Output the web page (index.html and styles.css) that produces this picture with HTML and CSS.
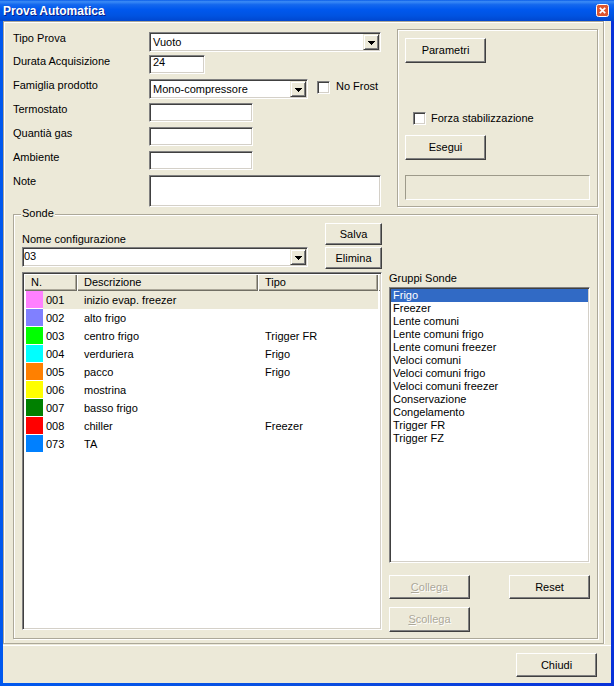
FILE: index.html
```html
<!DOCTYPE html>
<html>
<head>
<meta charset="utf-8">
<title>Prova Automatica</title>
<link rel="stylesheet" href="styles.css">
</head>
<body>
<div class="window">
  <div class="titlebar">
    <span class="title">Prova Automatica</span>
    <span class="close"><svg width="13" height="13" viewBox="0 0 13 13"><rect x="0.5" y="0.5" width="12" height="12" rx="2" fill="#DD5530" stroke="#fff"/><path d="M3.8 3.8L9.2 9.2M9.2 3.8L3.8 9.2" stroke="#fff" stroke-width="1.7"/></svg></span>
  </div>
  <div class="client">
    <div class="main">
      <div class="top">
        <div class="form">
          <span class="lbl">Tipo Prova</span>
          <div class="combo w232"><span class="ctext">Vuoto</span><span class="ddbtn"><svg width="7" height="4" viewBox="0 0 7 4"><path d="M0 0h7v1H0zM1 1h5v1H1zM2 2h3v1H2zM3 3h1v1H3z"/></svg></span></div>

          <span class="lbl">Durata Acquisizione</span>
          <div class="tbox w56">24</div>

          <span class="lbl">Famiglia prodotto</span>
          <div class="famrow">
            <div class="combo w159"><span class="ctext">Mono-compressore</span><span class="ddbtn"><svg width="7" height="4" viewBox="0 0 7 4"><path d="M0 0h7v1H0zM1 1h5v1H1zM2 2h3v1H2zM3 3h1v1H3z"/></svg></span></div>
            <span class="chk nofrost"></span>
            <span class="chklbl">No Frost</span>
          </div>

          <span class="lbl">Termostato</span>
          <div class="tbox w104"></div>

          <span class="lbl">Quantià gas</span>
          <div class="tbox w104"></div>

          <span class="lbl">Ambiente</span>
          <div class="tbox w104"></div>

          <span class="lbl">Note</span>
          <div class="tbox note"></div>
        </div>

        <div class="rbox">
          <button class="btn b81">Parametri</button>
          <div class="chkrow"><span class="chk"></span><span class="chklbl">Forza stabilizzazione</span></div>
          <button class="btn b81 esegui">Esegui</button>
          <div class="status"></div>
        </div>
      </div>

      <div class="group">
        <span class="legend">Sonde</span>
        <div class="lcol">
          <div class="cfgrow">
            <div class="cfgleft">
              <span class="lbl">Nome configurazione</span>
              <div class="combo w286"><span class="ctext t03">03</span><span class="ddbtn"><svg width="7" height="4" viewBox="0 0 7 4"><path d="M0 0h7v1H0zM1 1h5v1H1zM2 2h3v1H2zM3 3h1v1H3z"/></svg></span></div>
            </div>
            <div class="cfgbtns">
              <button class="btn b57">Salva</button>
              <button class="btn b57">Elimina</button>
            </div>
          </div>
          <div class="listview">
            <div class="lvhead">
              <span class="hc c1">N.</span>
              <span class="hc c2">Descrizione</span>
              <span class="hc c3">Tipo</span>
              <span class="hfill"></span>
            </div>
            <div class="row sel"><span class="sw" style="background:#FF80FF"></span><span class="cells"><span class="num">001</span><span class="desc">inizio evap. freezer</span><span class="tipo"></span></span></div>
            <div class="row"><span class="sw" style="background:#8080FF"></span><span class="cells"><span class="num">002</span><span class="desc">alto frigo</span><span class="tipo"></span></span></div>
            <div class="row"><span class="sw" style="background:#00FF00"></span><span class="cells"><span class="num">003</span><span class="desc">centro frigo</span><span class="tipo">Trigger FR</span></span></div>
            <div class="row"><span class="sw" style="background:#00FFFF"></span><span class="cells"><span class="num">004</span><span class="desc">verduriera</span><span class="tipo">Frigo</span></span></div>
            <div class="row"><span class="sw" style="background:#FF8000"></span><span class="cells"><span class="num">005</span><span class="desc">pacco</span><span class="tipo">Frigo</span></span></div>
            <div class="row"><span class="sw" style="background:#FFFF00"></span><span class="cells"><span class="num">006</span><span class="desc">mostrina</span><span class="tipo"></span></span></div>
            <div class="row"><span class="sw" style="background:#008000"></span><span class="cells"><span class="num">007</span><span class="desc">basso frigo</span><span class="tipo"></span></span></div>
            <div class="row"><span class="sw" style="background:#FF0000"></span><span class="cells"><span class="num">008</span><span class="desc">chiller</span><span class="tipo">Freezer</span></span></div>
            <div class="row"><span class="sw" style="background:#0080FF"></span><span class="cells"><span class="num">073</span><span class="desc">TA</span><span class="tipo"></span></span></div>
          </div>
        </div>
        <div class="rcol">
          <span class="lbl gl">Gruppi Sonde</span>
          <div class="listbox">
            <div class="item sel">Frigo</div>
            <div class="item">Freezer</div>
            <div class="item">Lente comuni</div>
            <div class="item">Lente comuni frigo</div>
            <div class="item">Lente comuni freezer</div>
            <div class="item">Veloci comuni</div>
            <div class="item">Veloci comuni frigo</div>
            <div class="item">Veloci comuni freezer</div>
            <div class="item">Conservazione</div>
            <div class="item">Congelamento</div>
            <div class="item">Trigger FR</div>
            <div class="item">Trigger FZ</div>
          </div>
          <div class="brow">
            <button class="btn b81 h24 dis"><u>C</u>ollega</button>
            <button class="btn b81 h24">Reset</button>
          </div>
          <button class="btn b81 dis scollega"><u>S</u>collega</button>
        </div>
      </div>
    </div>
    <div class="footer">
      <button class="btn b81 h24">Chiudi</button>
    </div>
  </div>
</div>
</body>
</html>
```

FILE: styles.css
```css
* { box-sizing: border-box; margin: 0; padding: 0; }
html, body { width: 614px; height: 686px; overflow: hidden; }
body {
  font-family: "Liberation Sans", Arial, sans-serif;
  font-size: 11px;
  line-height: 13px;
  color: #000;
  background: #ECE9D8;
}
.window {
  width: 614px;
  height: 686px;
  display: flex;
  flex-direction: column;
  background: linear-gradient(to right, #0058EE 0%, #0A4FE0 50%, #0831D9 100%);
}
.titlebar {
  height: 21px;
  flex: none;
  display: flex;
  justify-content: space-between;
  align-items: flex-start;
  padding: 4px 5px 0 3px;
  background: linear-gradient(to bottom, #0A5DE8 0%, #3B8BF6 8%, #1468EE 22%, #0058EE 45%, #0053E1 75%, #0046CF 100%);
}
.title {
  color: #fff;
  font-weight: bold;
  font-size: 12px;
  line-height: 14px;
  text-shadow: 1px 1px #0A1E88;
}
.close { display: block; width: 13px; height: 13px; }
.close svg { display: block; }

.client {
  flex: 1;
  margin: 0 3px 3px 3px;
  background: #ECE9D8;
  display: flex;
  flex-direction: column;
}
.main {
  width: 601px;
  height: 623px;
  flex: none;
  margin-bottom: 1px;
  border: 1px solid #ACA899;
  box-shadow: inset 1px 1px #fff, 1px 0 #fff;
  padding: 7px 0 0 9px;
}
.top { display: flex; height: 178px; }

.form {
  width: 384px;
  display: grid;
  grid-template-columns: 136px 248px;
  grid-template-rows: 23px 24px 24px 24px 24px 24px 32px;
  padding-top: 3px;
  align-items: start;
}
.lbl { display: block; line-height: 13px; white-space: nowrap; }
.form .lbl { margin-top: 0; }

.combo {
  height: 20px;
  display: flex;
  background: #fff;
  border: 1px solid;
  border-color: #808080 #fff #fff #808080;
  box-shadow: inset 1px 1px #404040, inset -1px -1px #D4D0C8;
}
.ctext { flex: 1; padding: 3px 0 0 3px; line-height: 13px; white-space: nowrap; }
.ctext.t03 { padding-left: 1px; padding-top: 2px; }
.ddbtn {
  width: 16px;
  margin: 1px;
  background: #ECE9D8;
  border: 1px solid;
  border-color: #ECE9D8 #404040 #404040 #ECE9D8;
  box-shadow: inset 1px 1px #fff, inset -1px -1px #808080;
  display: flex;
  align-items: center;
  justify-content: center;
}
.ddbtn svg { display: block; margin-top: 1px; }
.w232 { width: 232px; }
.w159 { width: 159px; }
.w286 { width: 286px; margin-top: 1px; }

.tbox {
  height: 19px;
  background: #fff;
  border: 1px solid;
  border-color: #808080 #fff #fff #808080;
  box-shadow: inset 1px 1px #404040, inset -1px -1px #D4D0C8;
  padding: 0 0 0 3px;
  line-height: 13px;
}
.w56 { width: 56px; }
.w104 { width: 104px; }
.note { width: 232px; height: 32px; }

.famrow { display: flex; align-items: flex-start; }
.chk {
  display: block;
  width: 13px;
  height: 13px;
  flex: none;
  background: #fff;
  border: 1px solid;
  border-color: #808080 #fff #fff #808080;
  box-shadow: inset 1px 1px #404040, inset -1px -1px #D4D0C8;
}
.nofrost { margin: 2px 0 0 9px; }
.chklbl { margin-left: 6px; line-height: 13px; white-space: nowrap; }
.famrow .chklbl { margin-top: 1px; }

.btn {
  display: flex;
  align-items: center;
  justify-content: center;
  background: #ECE9D8;
  border: 1px solid;
  border-color: #fff #404040 #404040 #fff;
  box-shadow: inset -1px -1px #808080;
  font-family: inherit;
  font-size: 11px;
  line-height: 13px;
  color: #000;
  flex: none;
}
.b81 { width: 81px; height: 25px; }
.b57 { width: 57px; height: 22px; }
.h24 { height: 24px; }
.dis { color: #ACA899; text-shadow: 1px 1px #fff; }
.dis u { text-decoration: underline; }

.rbox {
  width: 201px;
  height: 178px;
  border: 1px solid #ACA899;
  box-shadow: inset 1px 1px #fff, 1px 1px #fff;
  padding: 8px 0 0 7px;
  display: flex;
  flex-direction: column;
  align-items: flex-start;
}
.chkrow { display: flex; margin: 49px 0 0 8px; height: 13px; }
.chkrow .chklbl { margin-left: 5px; margin-top: 0; }
.esegui { margin-top: 10px; }
.status {
  margin-top: 15px;
  width: 185px;
  height: 25px;
  border: 1px solid;
  border-color: #9D9A8A #fff #fff #9D9A8A;
}

.group {
  position: relative;
  margin-top: 7px;
  width: 585px;
  height: 425px;
  border: 1px solid #ACA899;
  box-shadow: inset 1px 1px #fff, 1px 1px #fff;
  padding: 8px 0 0 8px;
  display: flex;
  gap: 7px;
}
.legend {
  position: absolute;
  top: -8px;
  left: 7px;
  padding: 0 1px;
  background: #ECE9D8;
  line-height: 13px;
}
.lcol { width: 360px; display: flex; flex-direction: column; }
.cfgrow { display: flex; justify-content: space-between; height: 46px; }
.cfgleft { width: 286px; padding-top: 10px; }
.cfgbtns { width: 57px; display: flex; flex-direction: column; gap: 2px; }

.listview {
  margin-top: 3px;
  height: 358px;
  background: #fff;
  border: 1px solid;
  border-color: #808080 #fff #fff #808080;
  box-shadow: inset 1px 1px #404040, inset -1px -1px #D4D0C8;
  padding: 1px;
}
.lvhead { display: flex; height: 17px; }
.hc {
  display: block;
  height: 17px;
  padding: 2px 0 0 7px;
  background: #ECE9D8;
  box-shadow: inset 1px 1px #fff, inset -1px -1px #716F64, inset -2px -2px #ACA899;
  white-space: nowrap;
}
.c1 { width: 53px; }
.c2 { width: 181px; }
.c3 { width: 120px; }
.hfill { flex: 1; background: #ECE9D8; box-shadow: inset 1px 1px #fff, inset 0 -1px #716F64; }

.row { display: flex; height: 18px; line-height: 18px; }
.sw { display: block; width: 17px; height: 17px; margin-left: 2px; flex: none; }
.cells { display: flex; width: 335px; }
.row.sel .cells { background: #ECE9D8; }
.num { width: 34px; padding-left: 3px; }
.desc { width: 181px; padding-left: 7px; white-space: nowrap; }
.tipo { width: 120px; padding-left: 7px; white-space: nowrap; }

.rcol { width: 201px; display: flex; flex-direction: column; }
.gl { margin-top: 49px; }
.listbox {
  margin-top: 2px;
  height: 276px;
  background: #fff;
  border: 1px solid;
  border-color: #808080 #fff #fff #808080;
  box-shadow: inset 1px 1px #404040, inset -1px -1px #D4D0C8;
  padding: 1px;
}
.item { height: 13px; line-height: 13px; padding-left: 2px; white-space: nowrap; }
.item.sel { background: #316AC5; color: #fff; }
.brow { margin-top: 12px; display: flex; justify-content: space-between; }
.scollega { margin-top: 8px; }

.footer {
  flex: 1;
  border-top: 1px solid #fff;
  display: flex;
  justify-content: flex-end;
  padding: 7px 14px 0 0;
}
```
